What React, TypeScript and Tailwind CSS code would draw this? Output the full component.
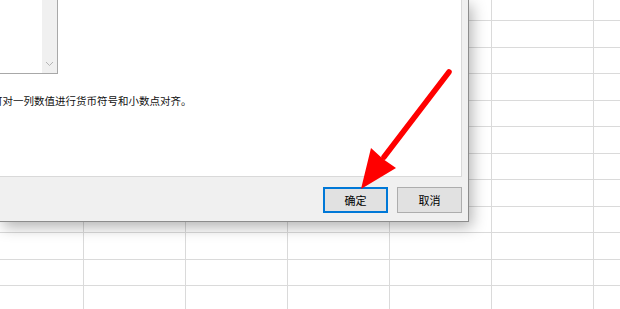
import React from "react";

const ROWS = 13;
const COLS = 7;

export default function App() {
  const cells = [];
  for (let r = 0; r < ROWS; r++) {
    for (let c = 0; c < COLS; c++) {
      cells.push(
        <div key={`${r}-${c}`} className="h-[26.5px] border-r border-b border-[#dadada] bg-white" />
      );
    }
  }
  return (
    <div
      className="relative w-[620px] h-[309px] overflow-hidden bg-white"
      style={{ fontFamily: '"Noto Sans CJK SC", "Noto Sans", sans-serif' }}
    >
      <div className="grid grid-cols-[repeat(7,102px)] ml-[-18px] mt-[-5.5px]">{cells}</div>

      {/* dialog */}
      <div className="absolute left-0 top-0 w-[469px] h-[222px] bg-[#f0f0f0] border-r border-b border-[#8c8c8c] shadow-[3px_5px_14px_rgba(0,0,0,0.3)] flex flex-col">
        <div className="w-[462px] h-[177px] bg-white border-r border-b border-[#d9d9d9] flex flex-col">
          <div className="w-[58px] h-[74px] border-r border-b border-[#a8a8a8] flex">
            <div className="flex-1 bg-white" />
            <div className="w-[15px] bg-[#f0f0f0] flex flex-col justify-end items-center pb-[6px]">
              <svg width="9" height="6" viewBox="0 0 9 6">
                <path d="M1 1 L4.5 4.5 L8 1" fill="none" stroke="#b5b5b5" strokeWidth="1" />
              </svg>
            </div>
          </div>
          <div className="mt-[21px] ml-[-8px] text-[10.5px] leading-[11px] text-[#111] whitespace-nowrap">
            可对一列数值进行货币符号和小数点对齐。
          </div>
        </div>
        <div className="flex-1 flex justify-end items-start pt-[10px] pr-[6px] gap-[9px]">
          <button className="w-[65px] h-[26px] bg-[#e1e1e1] border-2 border-[#0078d7] text-[11px] leading-none text-black flex items-center justify-center">
            确定
          </button>
          <button className="w-[65px] h-[26px] bg-[#e1e1e1] border border-[#adadad] text-[11px] leading-none text-black flex items-center justify-center">
            取消
          </button>
        </div>
      </div>

      {/* red arrow annotation */}
      <svg className="absolute inset-0 pointer-events-none" width="620" height="309" viewBox="0 0 620 309">
        <line x1="449" y1="72" x2="384" y2="157" stroke="#ff0000" strokeWidth="5.5" strokeLinecap="round" />
        <polygon points="361,189 371,148 383,159 396,168" fill="#ff0000" />
      </svg>
    </div>
  );
}
